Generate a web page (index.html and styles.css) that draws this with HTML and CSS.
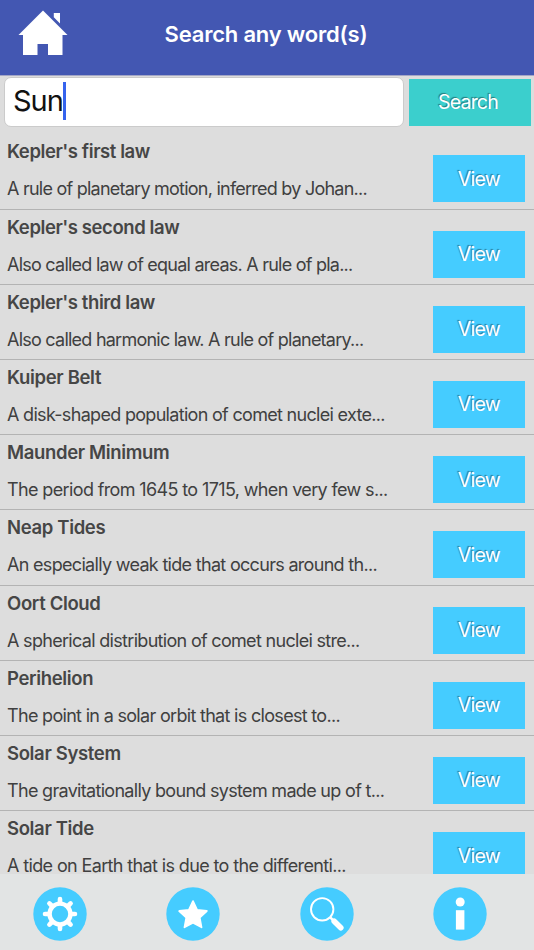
FILE: index.html
```html
<!DOCTYPE html>
<html lang="en">
<head>
  <meta charset="UTF-8" />
  <meta name="viewport" content="width=device-width, initial-scale=1.0" />
  <title>Search any word(s)</title>
  <link rel="stylesheet" href="styles.css">
</head>
<body>
  <header>
    <a class="home" href="#" aria-label="Home">
      <svg width="50" height="46" viewBox="0 0 50 46">
        <path fill="#fff" d="M25 0.5 L0.5 25 H5 V45 H19.5 V34 H30 V45 H44.5 V25 H49.5 Z M35.8 3 H42 V13.5 L35.8 7.3 Z" />
      </svg>
    </a>
    <h1>Search any word(s)</h1>
  </header>

  <div class="search-bar">
    <div class="search-input"><span>Sun</span><i class="caret"></i></div>
    <button class="search-button">Search</button>
  </div>

  <main class="results">
    <div class="row tight">
      <div class="text"><h2>Kepler's first law</h2><p>A rule of planetary motion, inferred by Johan...</p></div>
      <button class="view">View</button>
    </div>
    <div class="row tight">
      <div class="text"><h2>Kepler's second law</h2><p>Also called law of equal areas. A rule of pla...</p></div>
      <button class="view">View</button>
    </div>
    <div class="row tight">
      <div class="text"><h2>Kepler's third law</h2><p>Also called harmonic law. A rule of planetary...</p></div>
      <button class="view">View</button>
    </div>
    <div class="row">
      <div class="text"><h2>Kuiper Belt</h2><p>A disk-shaped population of comet nuclei exte...</p></div>
      <button class="view">View</button>
    </div>
    <div class="row loose">
      <div class="text"><h2>Maunder Minimum</h2><p>The period from 1645 to 1715, when very few s...</p></div>
      <button class="view">View</button>
    </div>
    <div class="row">
      <div class="text"><h2>Neap Tides</h2><p>An especially weak tide that occurs around th...</p></div>
      <button class="view">View</button>
    </div>
    <div class="row">
      <div class="text"><h2>Oort Cloud</h2><p>A spherical distribution of comet nuclei stre...</p></div>
      <button class="view">View</button>
    </div>
    <div class="row">
      <div class="text"><h2>Perihelion</h2><p>The point in a solar orbit that is closest to...</p></div>
      <button class="view">View</button>
    </div>
    <div class="row">
      <div class="text"><h2>Solar System</h2><p>The gravitationally bound system made up of t...</p></div>
      <button class="view">View</button>
    </div>
    <div class="row loose">
      <div class="text"><h2>Solar Tide</h2><p>A tide on Earth that is due to the differenti...</p></div>
      <button class="view">View</button>
    </div>
  </main>

  <nav>
    <a href="#" aria-label="Settings">
      <svg width="54" height="54" viewBox="-27 -27 54 54">
        <circle r="26.7" fill="#45ccff" />
        <circle r="10.4" fill="none" stroke="#fff" stroke-width="4.4" />
        <g stroke="#fff" stroke-width="4.6" stroke-linecap="round">
          <path d="M0 -12 V-15 M0 12 V15 M-12 0 H-15 M12 0 H15" />
          <path d="M8.5 -8.5 L10.6 -10.6 M8.5 8.5 L10.6 10.6 M-8.5 8.5 L-10.6 10.6 M-8.5 -8.5 L-10.6 -10.6" />
        </g>
      </svg>
    </a>
    <a href="#" aria-label="Favourites">
      <svg width="54" height="54" viewBox="-27 -27 54 54">
        <circle r="26.7" fill="#45ccff" />
        <path fill="#fff" stroke="#fff" stroke-width="1.8" stroke-linejoin="round" d="M0 -12.9 L4.1 -4.2 L13.8 -3 L6.7 3.7 L8.5 13.3 L0 8.7 L-8.5 13.3 L-6.7 3.7 L-13.8 -3 L-4.1 -4.2 Z" />
      </svg>
    </a>
    <a href="#" aria-label="Search">
      <svg width="54" height="54" viewBox="-27 -27 54 54">
        <circle r="26.7" fill="#45ccff" />
        <circle cx="-4.8" cy="-4.7" r="11.2" fill="none" stroke="#fff" stroke-width="1.9" />
        <path d="M3 3.2 L8 8.2" stroke="#fff" stroke-width="2.6" />
        <path d="M7.2 7.2 L13.8 13.8" stroke="#fff" stroke-width="5.6" stroke-linecap="round" />
      </svg>
    </a>
    <a href="#" aria-label="Info">
      <svg width="54" height="54" viewBox="-27 -27 54 54">
        <circle r="26.7" fill="#45ccff" />
        <circle cx="0.2" cy="-12" r="4.5" fill="#fff" />
        <rect x="-4.1" y="-3.8" width="8.5" height="19.4" fill="#fff" />
      </svg>
    </a>
  </nav>
</body>
</html>
```
FILE: styles.css
```css
* {
  box-sizing: border-box;
  margin: 0;
  padding: 0;
}

body {
  font-family: Inter, "Liberation Sans", sans-serif;
  display: flex;
  flex-direction: column;
  height: 100vh;
  overflow: hidden;
  background: #dddddd;
  color: #404040;
}

header {
  flex: none;
  height: 76px;
  background: #4357b2;
  border-bottom: 1px solid #a3a6c6;
  color: white;
  display: grid;
  grid-template-columns: 86px 1fr 86px;
}

.home {
  padding: 9.5px 0 0 18px;
}

header h1 {
  font-size: 22px;
  font-weight: 600;
  letter-spacing: -0.2px;
  line-height: 68px;
  padding-right: 2px;
  text-align: center;
  white-space: nowrap;
}

.search-bar {
  flex: none;
  display: flex;
  height: 58.4px;
  padding: 1px 3px 0 4px;
}

.search-input {
  width: 400px;
  height: 50px;
  display: flex;
  align-items: center;
  padding: 0 0 3px 8px;
  background: white;
  border: 1px solid #cbcbcb;
  border-radius: 7px;
  color: #111;
  font-size: 29px;
  letter-spacing: -1px;
}

.caret {
  width: 3px;
  height: 38px;
  background: #3563ee;
}

button {
  border: none;
  color: white;
  font-family: inherit;
  text-shadow: -1px -1px 1px rgba(0, 0, 0, 0.4);
}

.search-button {
  width: 122px;
  height: 47px;
  margin: 2px 0 0 5px;
  padding: 0 4px 2px 0;
  background: #3bcfcd;
  font-size: 19.5px;
  letter-spacing: -0.8px;
}

.results {
  flex: 1;
  min-height: 0;
  overflow: hidden;
}

.row {
  display: flex;
  justify-content: space-between;
  height: 75.2px;
  padding: 0 8.6px 0 7px;
  border-bottom: 1px solid #b3b3b3;
}

.text {
  white-space: nowrap;
}

.row h2 {
  font-size: 18.5px;
  font-weight: 600;
  letter-spacing: -0.34px;
  line-height: 34px;
  color: #464646;
}

.row p {
  font-size: 18px;
  letter-spacing: -0.69px;
  line-height: 42px;
}

.tight h2 {
  letter-spacing: -0.42px;
}

.tight p {
  letter-spacing: -0.76px;
}

.loose p {
  letter-spacing: -0.63px;
}

.view {
  width: 92px;
  height: 47px;
  margin-top: 21px;
  padding-right: 1px;
  background: #45ccff;
  font-size: 19.5px;
  letter-spacing: -0.7px;
}

nav {
  flex: none;
  display: flex;
  justify-content: space-between;
  height: 76px;
  padding: 13px 47px 0 33px;
  background: #e2e4e4;
}

nav a {
  width: 54px;
  height: 54px;
}
```
